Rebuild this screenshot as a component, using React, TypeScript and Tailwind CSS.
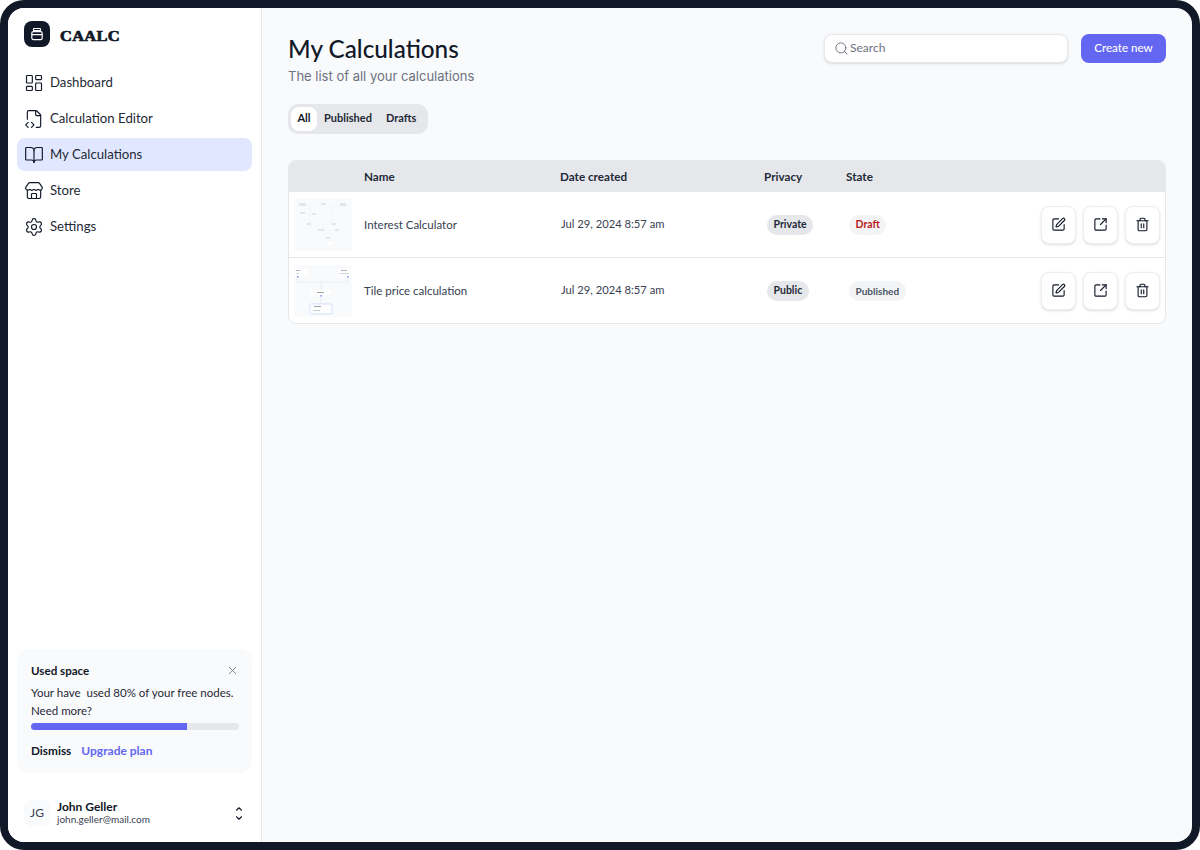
import { BookOpen, ChevronDown, ChevronUp, FileCode2, LayoutDashboard, Search, Settings, SquareArrowOutUpRight, SquarePen, Store, Trash2, X } from "lucide-react";

const nav = [
  { label: "Dashboard", icon: LayoutDashboard },
  { label: "Calculation Editor", icon: FileCode2 },
  { label: "My Calculations", icon: BookOpen, active: true },
  { label: "Store", icon: Store },
  { label: "Settings", icon: Settings },
];

function LogoMark() {
  return (
    <svg width="14" height="14" viewBox="0 0 14 14" fill="none" stroke="#fff" strokeWidth="1.2">
      <rect x="3.5" y="1.5" width="7" height="2.2" rx="0.6" />
      <rect x="1.8" y="4.6" width="10.4" height="8" rx="1.6" />
      <path d="M1.8 7.6h10.4" />
    </svg>
  );
}

function ThumbOne() {
  return (
    <svg width="58" height="52" viewBox="0 0 58 52" className="bg-[#f9fafb]" fill="none">
      <g stroke="#eef0f3" strokeWidth="0.5">
        <path d="M8 7h46M16 7v18M38 7v18M24 25h14M30 25v12" />
      </g>
      <g fill="#e3e5ea">
        <rect x="5" y="4" width="7" height="3" />
        <rect x="27" y="4" width="5" height="2" />
        <rect x="46" y="4" width="6" height="3" />
        <rect x="6" y="13" width="5" height="2" />
        <rect x="18" y="14" width="4" height="2" />
        <rect x="13" y="24" width="4" height="2" />
        <rect x="38" y="24" width="4" height="2" />
        <rect x="24" y="30" width="6" height="2" />
        <rect x="41" y="30" width="4" height="2" />
        <rect x="32" y="38" width="4" height="2" />
      </g>
      <rect x="32" y="42" width="8" height="5" fill="#fff" stroke="#eef0f3" strokeWidth="0.5" />
    </svg>
  );
}

function ThumbTwo() {
  return (
    <svg width="58" height="52" viewBox="0 0 58 52" className="bg-[#f9fafb]" fill="none">
      <path d="M3 13v4h51v-4M27 17v22" stroke="#e5e7eb" strokeWidth="0.7" />
      <rect x="0" y="4" width="14" height="8" fill="#fff" />
      <rect x="44" y="4" width="14" height="8" fill="#fff" />
      <rect x="2" y="5" width="4" height="1" fill="#b0b4bc" />
      <rect x="2" y="8" width="3" height="1" fill="#d1d5db" />
      <rect x="47" y="5" width="6" height="1" fill="#b0b4bc" />
      <rect x="45" y="8" width="10" height="1" fill="#d1d5db" />
      <rect x="3" y="11" width="1.5" height="1.5" fill="#818cf8" />
      <rect x="53" y="11" width="1.5" height="1.5" fill="#818cf8" />
      <rect x="17" y="25" width="20" height="5" fill="#fff" />
      <rect x="23" y="27" width="7" height="1" fill="#9ca3af" />
      <rect x="26.5" y="30" width="1.5" height="1.5" fill="#818cf8" />
      <rect x="16" y="39" width="22" height="10" rx="1" fill="#fff" stroke="#c7d2fe" strokeWidth="0.7" />
      <rect x="20" y="41" width="7" height="1" fill="#9ca3af" />
      <rect x="19" y="45" width="7" height="1" fill="#c5c8cf" />
    </svg>
  );
}

const rows = [
  { name: "Interest Calculator", privacy: "Private", state: "Draft", stateClass: "text-[10.5px] text-[#b91c1c]", thumb: <ThumbOne /> },
  { name: "Tile price calculation", privacy: "Public", state: "Published", stateClass: "text-[10px] text-[#4b5563]", thumb: <ThumbTwo /> },
];

const tableCols = "grid grid-cols-[75px_196px_204px_82px_1fr_auto]";

export default function App() {
  return (
    <div className="h-[850px] w-[1200px] overflow-hidden bg-white font-['Lato',sans-serif] text-[#111827]">
      <div className="h-full rounded-[24px] bg-[#111827] p-2">
        <div className="flex h-full overflow-hidden rounded-[16px] bg-[#f9fafc]">
          <aside className="flex w-[254px] shrink-0 flex-col border-r border-[#e5e7eb] bg-white pl-[9px] pr-[9px]">
            <div className="flex items-center gap-[10px] pl-[7px] pt-[13px]">
              <div className="flex size-[26px] items-center justify-center rounded-[8px] bg-[#111827]">
                <LogoMark />
              </div>
              <span className="mt-[4px] origin-left scale-x-[1.1] font-['Liberation_Serif',serif] text-[15px] font-bold leading-none tracking-[0.2px] text-[#111827] [-webkit-text-stroke:0.7px_#111827]">CAALC</span>
            </div>
            <nav className="mt-[19px] flex flex-col gap-[3px]">
              {nav.map(({ label, icon: Icon, active }) => (
                <div key={label} className={`flex h-[33px] items-center gap-[6px] rounded-lg pl-[7px] text-[13.2px] text-[#1f2937] ${active ? "bg-[#e0e7ff]" : ""}`}>
                  <Icon size={20} strokeWidth={1.4} className="shrink-0 text-[#111827]" />
                  <span>{label}</span>
                </div>
              ))}
            </nav>
            <div className="mt-auto rounded-xl bg-[#f9fafb] pb-[15px] pl-[14px] pr-[13px] pt-[13px]">
              <div className="flex items-center justify-between">
                <span className="text-[11.6px] font-bold">Used space</span>
                <X size={13} strokeWidth={1.5} className="text-[#6b7280]" />
              </div>
              <p className="mt-[5px] whitespace-nowrap text-[11.5px] leading-[18px] text-[#1f2937]">
                Your have&nbsp; used 80% of your free nodes.
                <br />
                Need more?
              </p>
              <div className="mt-[3px] h-[7px] overflow-hidden rounded-full bg-[#e5e7eb]">
                <div className="h-full w-[75%] bg-[#6366f1]" />
              </div>
              <div className="mt-[13px] flex gap-[10px] text-[11.8px] font-bold leading-[15px]">
                <span>Dismiss</span>
                <span className="text-[12px] text-[#6366f1]">Upgrade plan</span>
              </div>
            </div>
            <div className="mb-[16px] mt-[27px] flex items-center gap-[7px] pl-[7px] pr-[8px]">
              <div className="flex size-[26px] items-center justify-center rounded-lg bg-[#f9fafb] text-xs text-[#374151]">JG</div>
              <div className="flex-1">
                <div className="text-xs font-bold leading-[13px]">John Geller</div>
                <div className="text-[10px] leading-[13px] text-[#374151]">john.geller@mail.com</div>
              </div>
              <div className="flex flex-col items-center">
                <ChevronUp size={10} strokeWidth={2.6} className="-mb-[1px]" />
                <ChevronDown size={10} strokeWidth={2.6} />
              </div>
            </div>
          </aside>

          <main className="min-w-0 flex-1 pl-[26px] pr-[26px]">
            <header className="flex items-start justify-between pt-[25px]">
              <div>
                <h1 className="text-[24.3px] font-medium leading-8">My Calculations</h1>
                <p className="mt-px font-['Inter',sans-serif] text-[13px] leading-5 text-[#6b7280]">The list of all your calculations</p>
              </div>
              <div className="mt-px flex items-center gap-[13px]">
                <div className="flex h-[29px] w-[244px] items-center gap-px rounded-lg border border-[#e5e7eb] bg-white pb-px pl-[9px] shadow-sm">
                  <Search size={15} strokeWidth={1.5} className="text-[#6b7280]" />
                  <span className="text-xs text-[#6b7280]">Search</span>
                </div>
                <button className="flex h-[29px] w-[85px] items-center justify-center rounded-lg bg-[#6366f1] pb-px text-[11.6px] font-medium text-white">Create new</button>
              </div>
            </header>

            <div className="mt-[18px] inline-flex h-[30px] items-center rounded-[10px] bg-[#e5e7eb] pb-px pl-[3px] pr-[5px] text-[11px] font-bold">
              <span className="flex h-6 w-[26px] items-center justify-center rounded-lg bg-white">All</span>
              <span className="px-[7px] text-[#1f2937]">Published</span>
              <span className="px-[7px] text-[#1f2937]">Drafts</span>
            </div>

            <section className="mt-[26px] overflow-hidden rounded-lg border border-[#e5e7eb] bg-white">
              <div className={`${tableCols} h-[31px] items-center bg-[#e5e7eb] text-[11.7px] font-bold text-[#1f2937]`}>
                <div />
                <div>Name</div>
                <div>Date created</div>
                <div>Privacy</div>
                <div>State</div>
                <div />
              </div>
              {rows.map((row, i) => (
                <div key={row.name} className={`${tableCols} items-center text-[#374151] ${i === 0 ? "h-[66px] border-b border-[#e5e7eb]" : "h-[65px]"}`}>
                  <div className="pl-[5px]">{row.thumb}</div>
                  <div className="text-[11.5px]">{row.name}</div>
                  <div className="pl-px text-[11.2px]">Jul 29, 2024 8:57 am</div>
                  <div className="flex pl-[3px]">
                    <span className="flex h-5 items-center rounded-full bg-[#e5e7eb] px-[6.5px] pt-px text-[10.5px] font-bold text-[#1f2937]">{row.privacy}</span>
                  </div>
                  <div className="flex pl-[3px]">
                    <span className={`flex h-5 items-center rounded-full bg-[#f3f4f6] px-[6.5px] pt-px font-bold ${row.stateClass}`}>{row.state}</span>
                  </div>
                  <div className="flex gap-[7px] pr-[5px]">
                    {[SquarePen, SquareArrowOutUpRight, Trash2].map((Icon, j) => (
                      <button key={j} className="flex h-[38px] w-[35px] items-center justify-center rounded-lg border border-[#eceef1] bg-white shadow-sm">
                        <Icon size={15} strokeWidth={1.8} className="text-[#111827]" />
                      </button>
                    ))}
                  </div>
                </div>
              ))}
            </section>
          </main>
        </div>
      </div>
    </div>
  );
}
